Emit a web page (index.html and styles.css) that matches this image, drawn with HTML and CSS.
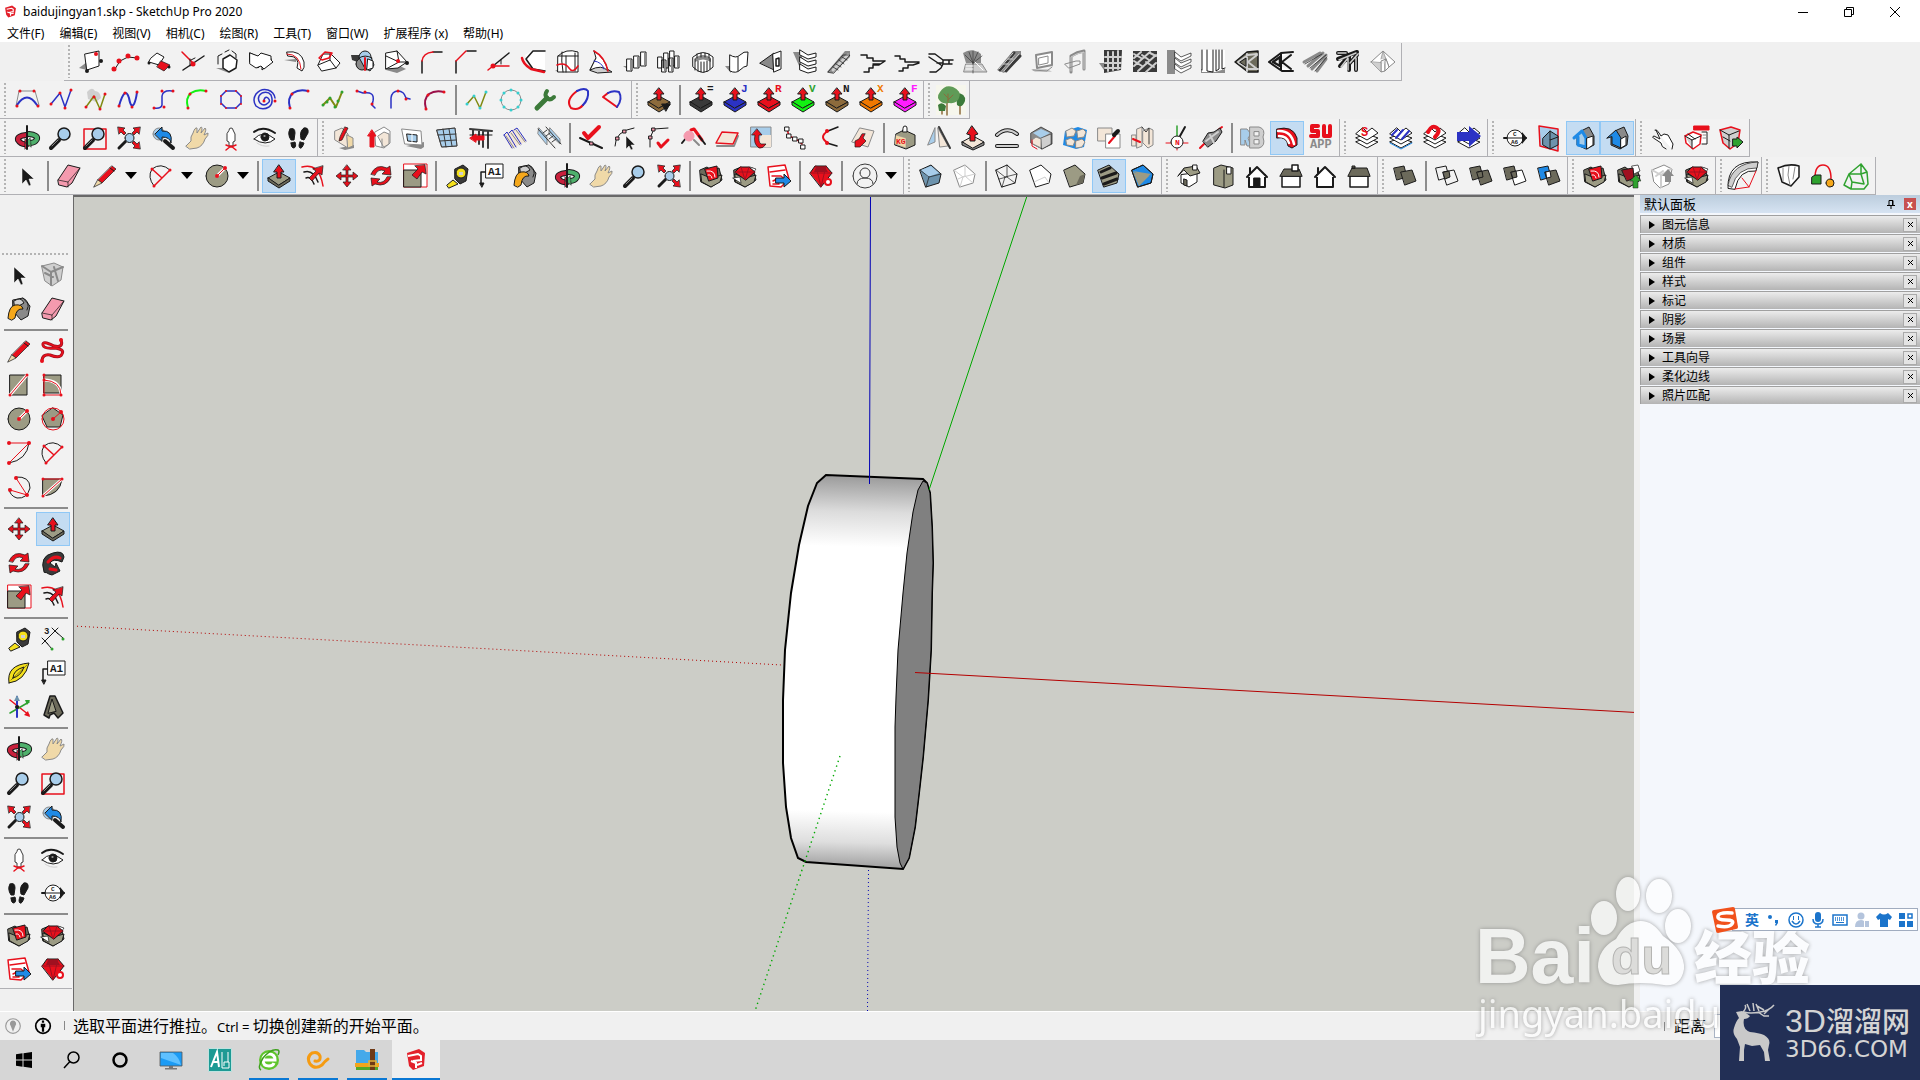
FILE: index.html
```html
<!DOCTYPE html>
<html lang="zh-CN">
<head>
<meta charset="utf-8">
<title>baidujingyan1.skp - SketchUp Pro 2020</title>
<link rel="stylesheet" href="styles.css">
</head>
<body>
<header class="titlebar">
  <svg class="app-icon" viewBox="0 0 24 24"><path fill="#e3202b" d="M2 5 15 1l7 5-2 13-12 4-4-5z"/><path fill="none" stroke="#fff" stroke-width="2" d="M5 8l9-2 3 2v4l-8 2M6 13l6 2v5M13 16l5-1"/></svg>
  <h1 class="title">baidujingyan1.skp - SketchUp Pro 2020</h1>
  <div class="window-controls">
    <button class="win-btn" aria-label="最小化"><svg viewBox="0 0 12 12"><path d="M1 6.500h10"/></svg></button>
    <button class="win-btn" aria-label="还原"><svg viewBox="0 0 12 12"><path d="M1.500 3.500h7v7h-7zM3.500 3.500v-2h7v7h-2"/></svg></button>
    <button class="win-btn" aria-label="关闭"><svg viewBox="0 0 12 12"><path d="M1 1l10 10M11 1L1 11"/></svg></button>
  </div>
</header>
<nav class="menubar">
  <button>文件(F)</button><button>编辑(E)</button><button>视图(V)</button><button>相机(C)</button><button>绘图(R)</button><button>工具(T)</button><button>窗口(W)</button><button>扩展程序 (x)</button><button>帮助(H)</button>
</nav>
<section class="toolbars" aria-label="工具栏">
  <div class="toolbar-row indented">
    <div class="toolbar" data-tools="planePts dotArc foldRed crossPt hexShadow extrudeArrow bendPipe domeRed sphereRed hullRed filletA filletB angleRed wedgeRed boxRed sailRed columns columns2 ringCols sheet coneWin shelves ramp stairsA stairsB stairsC spiral escalator frameA frameB lattice weave louver blinds trussA trussB beams rafters roof"></div>
  </div>
  <div class="toolbar-row">
    <div class="toolbar" data-tools="bezArc bezPoly bezCloud bezU bezS bezGreen bezRound spiralB bezBlue bezLime bezStep bezHook bezMaroon | bezNode bezCircle wrench loopRB loopRB2"></div>
    <div class="toolbar" data-tools="pushMenu | pushE pushJ pushR pushV pushN pushX pushF"></div>
    <div class="toolbar" data-tools="trees"></div>
  </div>
  <div class="toolbar-row">
    <div class="toolbar" data-tools="orbit zoom zoomWin zoomExt prev hand person eye feet"></div>
    <div class="toolbar" data-tools="wallPen wallUp winFrame winGrid fence steps ladder | checkRed nodeArrow nodeCheck joinRed faceRed turnRed chain splitRed pageRed | kg mirror liftUp curveBar boxOpen boxes4 picker blocks compass screw | rb suFan* suapp"></div>
    <div class="toolbar" data-tools="layS layB layQ layGo"></div>
    <div class="toolbar" data-tools="section secPlane secCut* secFill*"></div>
    <div class="toolbar" data-tools="point compRed compGo"></div>
  </div>
  <div class="toolbar-row">
    <div class="toolbar" data-tools="cursor | eraser pencil+ arc+ circle+ | pushpull* offset move rotate scale | tape label bucket | orbit hand zoom zoomExt | whBox whGem whSend | gemGear | user+"></div>
    <div class="toolbar" data-tools="cubeX cubeBack | cubeWire cubeHidden cubeShade cubeTex* cubeMono"></div>
    <div class="toolbar" data-tools="hIso hTop hFront hRight hBack hLeft"></div>
    <div class="toolbar" data-tools="solidShell | solidInt solidUni solidSub solidTrim"></div>
    <div class="toolbar" data-tools="whBox whUp whGray whGem"></div>
    <div class="toolbar" data-tools="fan"></div>
    <div class="toolbar" data-tools="cloth linkBall meshG"></div>
  </div>
</section>
<main class="workspace">
  <aside class="palette" aria-label="大工具集">
    <div class="palette-box">
      <div class="palette-grid" data-tools="cursor compGray bucket eraser | pencil freehand rect rotRect circle polygon arc2 arc arc3 pie | move pushpull* rotate follow scale offset | tape dim protractor label axes text3d | orbit hand zoom zoomWin zoomExt prev | person eye feet section | whBox whGem whSend gemGear"></div>
    </div>
  </aside>
  <section class="viewport" aria-label="模型视图">
    <svg viewBox="74 197 1560 814" preserveAspectRatio="xMidYMid slice">
      <defs><linearGradient id="rim" gradientUnits="userSpaceOnUse" x1="868" y1="477" x2="858" y2="866">
        <stop offset="0" stop-color="#9c9c9c"/><stop offset=".04" stop-color="#b8b8b8"/><stop offset=".09" stop-color="#dcdcdc"/><stop offset=".18" stop-color="#fff"/><stop offset=".86" stop-color="#fff"/><stop offset=".94" stop-color="#dedede"/><stop offset="1" stop-color="#a4a4a4"/>
      </linearGradient></defs>
      <path fill="url(#rim)" stroke="#000" stroke-width="2" d="M826 475 817 483 808 506 799 545 791 593 785 650 783 700V763L786 807 791 838 798 858 806 862 903 869 909 858 915 827 919 793 923 757 928 700 931 650 932 593 933 563 932 527 930 493 927 483 923 479z"/>
      <path fill="#808080" stroke="#000" d="M923 481 918 490 913 512 907 553 903 593 898 650 896 697 895 727V817L897 847 900 863 903 869 909 858 915 827 919 793 923 757 928 700 931 650 932 593 933 563 932 527 930 493 927 483z"/>
      <g fill="none">
        <path stroke="#0000b4" d="M870.500 196 869.500 484"/><path stroke="#0000b4" stroke-dasharray="1 3" d="M868.500 870 867.500 1011"/>
        <path stroke="#00a800" d="M1027 196 929 490"/><path stroke="#00a800" stroke-width="1.400" stroke-dasharray="1.400 3.600" d="M840 756 755 1011"/>
        <path stroke="#b40000" stroke-dasharray="1 3" d="M73 626 782 665"/><path stroke="#b40000" d="M915 672.500 1636 712.500"/>
      </g>
    </svg>
  </section>
  <aside class="tray">
    <div class="tray-head"><h2>默认面板</h2>
      <button class="pin" aria-label="自动隐藏"><svg viewBox="0 0 8 10"><path fill="none" stroke="#000" d="M2 6V1.500h4V6M5.500 1v5M0 6.500h8M4 7v3"/></svg></button>
      <button class="tray-close" aria-label="关闭面板">x</button></div>
    <div class="tray-row"><button class="expand">图元信息</button><button class="row-close" aria-label="关闭"></button></div>
    <div class="tray-row"><button class="expand">材质</button><button class="row-close" aria-label="关闭"></button></div>
    <div class="tray-row"><button class="expand">组件</button><button class="row-close" aria-label="关闭"></button></div>
    <div class="tray-row"><button class="expand">样式</button><button class="row-close" aria-label="关闭"></button></div>
    <div class="tray-row"><button class="expand">标记</button><button class="row-close" aria-label="关闭"></button></div>
    <div class="tray-row"><button class="expand">阴影</button><button class="row-close" aria-label="关闭"></button></div>
    <div class="tray-row"><button class="expand">场景</button><button class="row-close" aria-label="关闭"></button></div>
    <div class="tray-row"><button class="expand">工具向导</button><button class="row-close" aria-label="关闭"></button></div>
    <div class="tray-row"><button class="expand">柔化边线</button><button class="row-close" aria-label="关闭"></button></div>
    <div class="tray-row"><button class="expand">照片匹配</button><button class="row-close" aria-label="关闭"></button></div>
  </aside>
</main>
<footer class="statusbar">
  <button class="status-btn" aria-label="地理位置"><svg viewBox="0 0 16 16"><circle cx="8" cy="8" r="6.500" fill="none" stroke="#999"/><path fill="#999" d="M8 3a3 3 0 0 1 2 5L8 13 6 8a3 3 0 0 1 2-5"/></svg></button>
  <button class="status-btn" aria-label="归属信息"><svg viewBox="0 0 16 16"><circle cx="8" cy="8" r="6.500" fill="none" stroke="#000" stroke-width="1.500"/><path fill="#000" d="M7 3h2v2H7zM6 6h4v3H9v4H7V9H6z"/></svg></button>
  <p class="hint">选取平面进行推拉。<span class="latin">Ctrl = </span>切换创建新的开始平面。</p>
  <label class="measure"><span>距离</span><input type="text" aria-label="距离"></label>
</footer>
<nav class="taskbar" aria-label="任务栏">
  <div class="task-group">
    <button aria-label="开始"><svg viewBox="0 0 24 24"><path d="M4 6.200 10.500 5.300V11.500H4zM11.500 5.200 20 4v7.500h-8.500zM4 12.500h6.500v6.200L4 17.800zM11.500 12.500H20V20l-8.500-1.200z"/></svg></button>
    <button aria-label="搜索"><svg viewBox="0 0 24 24"><path fill="none" stroke="#000" stroke-width="1.500" d="M9.500 14 4 20M8 9.500a5.500 5.500 0 1 0 11 0a5.500 5.500 0 1 0-11 0"/></svg></button>
    <button aria-label="Cortana"><svg viewBox="0 0 24 24"><circle cx="12" cy="12" r="6.500" fill="none" stroke="#000" stroke-width="2.500"/></svg></button>
  </div>
  <div class="task-group apps">
    <button aria-label="此电脑"><svg viewBox="0 0 24 24"><path fill="#1b9bf5" stroke="#555" stroke-width=".8" d="M1 4h22v14H1z"/><path fill="#5ec0ff" d="M2 5h12q6 4 8 12L2 10z"/><path fill="#777" d="M10 18h4v2h4v1.500H6V20h4z"/></svg></button>
    <button aria-label="Auto CAD"><svg viewBox="0 0 24 24"><path fill="#1d9a94" stroke="#bfe3e0" d="M.5.500h23v23H.500z"/><path fill="none" stroke="#fff" stroke-width="2" d="M3 19 9 4l2 15M5 14h5"/><path fill="none" stroke="#fff" d="M14 4v16h7v-6h-5v4M20 4v10"/></svg></button>
    <button class="open" aria-label="浏览器"><svg viewBox="0 0 24 24"><circle cx="12" cy="12" r="10" fill="#5fc52c"/><path fill="none" stroke="#fff" stroke-width="3" d="M6 12h12q0-6-6-6t-6 6 6 6q4 0 5-3"/><path fill="none" stroke="#3da01c" stroke-width="1.500" d="M4 22Q0 20 6 10 14 0 21 2q2 1 0 5"/></svg></button>
    <button class="open" aria-label="优酷"><svg viewBox="0 0 24 24"><path fill="none" stroke="#f59b12" stroke-width="3" stroke-linecap="round" d="M9 13q6 1 5-5-2-5-8-3-6 4-2 11 5 6 12 1 3-4 6-6"/></svg></button>
    <button class="open" aria-label="压缩"><svg viewBox="0 0 24 24"><path fill="#45a9ea" d="M1 2h8l2 2h12v12H1z"/><path fill="#f3a51c" d="M0 15h24v4H0z"/><path fill="#55a829" d="M1 19h22v3H1z"/><path fill="#6f3a17" d="M15 1h5v21h-5z"/><path fill="none" stroke="#e5b13a" stroke-width="1.500" d="M14 13h7v5h-7z"/></svg></button>
    <button class="open current" aria-label="SketchUp"><svg viewBox="0 0 24 24"><path fill="#e3202b" d="M3 5 15 1l6 4-1 13-11 4-4-4z"/><path fill="none" stroke="#fff" stroke-width="2" d="M4 8l10-2 3 2v4l-8 1M7 13l5 2v5M13 17l5-2"/></svg></button>
  </div>
</nav>

<div class="watermark">
  <svg viewBox="0 0 350 180">
    <g class="mark">
      <text class="bai" x="0" y="111">Bai</text>
      <g><ellipse cx="129" cy="46" rx="13" ry="17"/><ellipse cx="153" cy="22" rx="12" ry="17"/><ellipse cx="184" cy="24" rx="13" ry="17"/><ellipse cx="203" cy="54" rx="13" ry="17"/>
      <path d="M166 49q12 0 22 15 22 15 21 33-3 18-20 16-24-4-46 0-18 0-20-18 0-18 18-28 10-18 25-18z"/></g>
      <text class="cn" x="219" y="107">经验</text>
      <text class="url" x="3" y="156">jingyan.baidu</text>
    </g>
    <text class="du" x="136" y="102">du</text>
  </svg>
</div>

<div class="ime" role="toolbar" aria-label="输入法">
  <svg class="ime-logo" viewBox="0 0 28 28"><path fill="#f1511b" d="M3 4 22 1q2 0 2 2l3 18q0 2-2 2L7 27q-2 0-2-2L1 6q0-2 2-2"/><path fill="none" stroke="#fff" stroke-width="3.500" stroke-linecap="round" d="M21 7Q8 6 7 10t8 4 6 4-14 2"/></svg>
  <button class="ime-lang">英</button>
  <button aria-label="标点"><svg viewBox="0 0 16 16"><circle cx="4" cy="5" r="2"/><path d="M9 8h3v3l-2 3-1-1 1-2H9z"/></svg></button>
  <button aria-label="表情"><svg viewBox="0 0 16 16"><circle class="line" cx="8" cy="8" r="7"/><path d="M5 4h1v4H5zM10 4h1v4h-1z"/><path class="line" d="M4 9q4 6 8 0"/></svg></button>
  <button aria-label="语音"><svg viewBox="0 0 16 16"><rect x="5" y="0" width="6" height="10" rx="3"/><path class="line" d="M3 7q0 5 5 5t5-5M8 12v3M5 15h6"/></svg></button>
  <button aria-label="键盘"><svg viewBox="0 0 16 16"><rect class="line" x="1" y="3" width="14" height="10"/><path class="dash" d="M3 6h10M3 8h10"/><path d="M4 10h8v1H4z"/></svg></button>
  <button class="dim" aria-label="账户"><svg viewBox="0 0 16 16"><circle cx="7" cy="4" r="3.500"/><path d="M1 15q0-7 6-7 2 0 3 1v6zM11 9h4v6h-4z"/></svg></button>
  <button aria-label="皮肤"><svg viewBox="0 0 16 16"><path d="M4 1q4 3 8 0l4 4-2 3-2-1v8H4V7L2 8 0 5z"/></svg></button>
  <button aria-label="工具箱"><svg viewBox="0 0 16 16"><path d="M1 1h6v6H1zM1 9h6v6H1zM9 9h6v6H9z"/><path class="line" d="M10 2h4v4h-4z"/></svg></button>
</div>

<div class="brand">
  <svg viewBox="0 0 48 62" class="deer"><path fill="#c9c9c9" d="M4 10l6-1 4 2 4 3q-2 3-6 3-2 10 6 13 9 1 14 3 7 4 5 10l-1 5 2 11h-5l-1-9-4-7-8 1-7-2-1 6v11h-5l1-14-3-8q-5-6-3-11 2-7 5-10z"/><path fill="none" stroke="#c9c9c9" stroke-width="1.500" d="M11 10Q15 6 13 3M12 10q6 2 16 0 9-1 14-7M18 9l-3-7M22 9l-1-8M27 9l-3-7M32 8l-7-4M26 10l6 4h5M37 7l-5 5"/></svg>
  <div class="brand-text"><strong><span class="brand-3d">3D</span>溜溜网</strong><span class="brand-url">3D66.COM</span></div>
</div>
<script src="icons.js"></script>
</body>
</html>
```
FILE: styles.css
```css
* { box-sizing: border-box; }
html, body { margin: 0; height: 100%; }
body {
  position: relative;
  display: flex;
  flex-direction: column;
  overflow: hidden;
  background: #f0f0f0;
  color: #000;
  font: 12px/16px "Noto Sans", "Noto Sans CJK SC", sans-serif;
}
button { margin: 0; padding: 0; border: 0; background: none; color: inherit; font: inherit; }
svg { display: block; }

/* title and menus */
.titlebar { display: flex; align-items: center; height: 23px; padding: 0 2px 0 4px; background: #fff; }
.app-icon { width: 13px; height: 15px; }
.title { flex: 1; margin: 0 0 0 6px; font-size: 12px; font-weight: 400; }
.window-controls { display: flex; }
.win-btn { display: grid; place-items: center; width: 46px; height: 20px; }
.win-btn svg { width: 12px; height: 12px; fill: none; stroke: #000; }
.menubar { display: flex; gap: 15px; height: 19px; padding: 2px 7px 0; background: #fff; white-space: nowrap; }

/* toolbars */
.toolbars { padding-top: 1px; }
.toolbar-row { display: flex; height: 38px; }
.indented { padding-left: 64px; }
.toolbar {
  display: flex;
  align-items: center;
  flex: none;
  padding: 0 1px 0 10px;
  border: solid #b0b0b4;
  border-width: 0 1px 1px 0;
  background-color: #f2f2f2;
  background-image: linear-gradient(#f2f2f2 2px, transparent 2px), linear-gradient(#b4b4b4, #b4b4b4);
  background-repeat: repeat-y, no-repeat;
  background-size: 10px 4px, 2px 33px;
  background-position: 0 0, 4px 2px;
}
.tool { display: grid; place-items: center; width: 34px; height: 34px; border: 1px solid transparent; }
.tool svg { width: 24px; height: 24px; overflow: visible; stroke-linecap: round; stroke-linejoin: round; }
.tool.active { border-color: #90c8f6; background: #c4dcf2; }
.tool.split { display: flex; align-items: center; width: 56px; padding-left: 6px; gap: 8px; }
.tool.split::after { content: ""; border: solid transparent; border-width: 7px 6px 0; border-top-color: #000; }
.sep { width: 2px; height: 30px; margin: 0 3px; background: #8c8c8c; }

/* workspace */
.workspace { display: flex; flex: 1; min-height: 0; }
.palette { width: 73px; padding-top: 55px; }
.palette-box {
  width: 72px;
  padding: 8px 0 2px 2px;
  border-bottom: 1px solid #b0b0b4;
  background-color: #f2f2f2;
  background-image: linear-gradient(90deg, #f2f2f2 2px, transparent 2px), linear-gradient(#b4b4b4, #b4b4b4);
  background-repeat: repeat-x, no-repeat;
  background-size: 4px 7px, 68px 2px;
  background-position: 0 0, 2px 3px;
}
.palette-grid { display: grid; grid-template-columns: 34px 34px; }
.palette .sep { grid-column: 1 / -1; width: 64px; height: 2px; margin: 3px 2px; }
.viewport { flex: 1; min-width: 0; border: solid #696969; border-width: 2px 0 0 1px; background: #cccdc7; overflow: hidden; }
.viewport svg { width: 100%; height: 100%; }
.tray { width: 286px; border-left: 6px solid #f0f0f0; background: #f4f7fc; }
.tray-head { display: flex; align-items: center; height: 18px; margin-bottom: 2px; padding: 0 4px; background: linear-gradient(#bccddd, #d6e3f2); }
.tray-head h2 { flex: 1; margin: 0; font-size: 13px; font-weight: 400; }
.pin { width: 8px; margin-right: 9px; }
.tray-close { width: 12px; height: 12px; background: #c75050; color: #fff; font-size: 10px; font-weight: 700; line-height: 10px; }
.tray-row { display: flex; align-items: center; height: 18px; margin-bottom: 1px; padding-right: 3px; border: solid #a0a0a0; border-width: 1px 0 0 1px; background: linear-gradient(#ececec, #b4b4b4); }
.expand { display: flex; flex: 1; align-items: center; gap: 7px; padding-left: 8px; text-align: left; }
.expand::before { content: ""; border: solid transparent; border-width: 4px 0 4px 6px; border-left-color: #000; }
.row-close { width: 14px; height: 14px; border: 1px solid #aaa; background: linear-gradient(45deg, transparent 42%, #000 42%, #000 58%, transparent 58%) center / 5px 5px no-repeat, linear-gradient(-45deg, transparent 42%, #000 42%, #000 58%, transparent 58%) center / 5px 5px no-repeat, #e4e4e4; }

/* status bar */
.statusbar { display: flex; align-items: center; height: 29px; padding-left: 4px; border-top: 1px solid #fff; }
.status-btn { width: 18px; margin-right: 12px; }
.status-btn svg { width: 18px; height: 18px; }
.hint { flex: 1; margin: 0; padding-left: 9px; background: linear-gradient(#888, #888) no-repeat 0 6px / 1px 9px; font-size: 16px; line-height: 22px; white-space: pre; }
.hint .latin { font-size: 13px; }
.measure { display: flex; align-items: center; gap: 8px; width: 256px; padding-left: 10px; background: linear-gradient(#888, #888) no-repeat 0 8px / 1px 9px; font-size: 16px; line-height: 24px; white-space: nowrap; }
.measure input { flex: 1; min-width: 0; height: 24px; border: 1px solid #a9b3c4; background: #fff; }

/* taskbar */
.taskbar { display: flex; gap: 3px; height: 40px; background: #d6d6d6; }
.task-group { display: flex; }
.task-group button { display: grid; place-items: center; width: 48px; height: 40px; }
.task-group svg { width: 24px; height: 24px; }
.apps { gap: 1px; }
.apps .open { background: linear-gradient(#0a78d4, #0a78d4) no-repeat 4px 38px / 40px 2px; }
.apps .current { background: linear-gradient(#0a78d4, #0a78d4) no-repeat 0 38px / 48px 2px, #efefef; }

/* overlays */
.watermark { position: absolute; right: 95px; bottom: 28px; width: 350px; height: 180px; }
.mark { fill: #fff; opacity: .72; filter: drop-shadow(0 0 2px #808080); }
.bai { font: 700 77px "Liberation Sans", sans-serif; }
.cn { font: 900 58px "Noto Sans CJK SC", sans-serif; }
.url { font: 38px "Noto Sans", sans-serif; }
.du { fill: #dcdcda; stroke: #b4b4b2; font: 700 50px "Liberation Sans", sans-serif; }
.ime { position: absolute; right: 2px; bottom: 149px; display: flex; align-items: center; height: 23px; border: 1px solid #a0acbf; background: #fff; }
.ime-logo { width: 28px; height: 28px; margin: 0 2px 0 -22px; }
.ime button { display: grid; place-items: center; width: 22px; height: 21px; color: #1b74cb; }
.ime button svg { width: 16px; height: 16px; fill: currentColor; }
.ime .line, .ime .dash { fill: none; stroke: currentColor; stroke-width: 1.5; }
.ime .dash { stroke-dasharray: 1 1; }
.ime .dim { color: #b4c4dc; }
.ime .ime-lang { font-size: 14px; font-weight: 700; }
.brand { position: absolute; right: 0; bottom: 0; display: flex; align-items: center; gap: 5px; width: 200px; height: 95px; padding-left: 12px; background: #222f55; color: #d4d4d4; }
.deer { flex: none; width: 48px; height: 62px; }
.brand-text { display: flex; flex-direction: column; white-space: nowrap; }
.brand strong { font: 500 28px/32px "Noto Sans CJK SC", sans-serif; }
.brand .brand-3d { font: 32px/32px "Liberation Sans", sans-serif; }
.brand-url { font: 23px/24px "DejaVu Sans", sans-serif; }
```
FILE: icons.js
```js
// Each icon is a list of layers on a 24-unit grid: "<fill><stroke><width>:<path>",
// or "T<fill><size>:x y text" for a caption.
const INK = {
  n: 'none', k: '#1a1a1a', w: '#fff', r: '#e8101c', o: '#9c9b84', g: '#8a8a8a', l: '#cfcfcf',
  b: '#2b32c4', B: '#1f8ae6', c: '#35cfcf', G: '#2fa22f', L: '#12f012', y: '#f4e01c', Y: '#f5a81b',
  p: '#f49aae', s: '#f0d9a8', t: '#8d6b3c', D: '#3a3a3a', d: '#6c6a5b', m: '#9b1048', M: '#ff1cff',
  O: '#f07800', S: '#a8cdea', u: '#6d93ad', e: '#f3e6d8', a: '#7f8a12', R: '#a01020',
  F: '#5f9b57', f: '#3c7a3a', C: '#c8203c', E: '#4fb06c', i: '#f6f6ec'
};
const ARROW = 'rk1:M12 0 17 6H14V12H10V6H7z';
const push = (c, l, ink) => `${c}k1:M1 14 12 8 23 14 12 20z|${c}k1:M1 14v3l11 7 11-7v-3L12 20z|${ARROW}` + (l ? `|T${ink}11:18 4 ${l}` : '');
const layers = 'wk1:M1 16 12 22 23 16 12 12z|wk1:M1 12 12 18 23 12 12 8z|wk1:M1 8 12 14 23 7 17 2 12 6 8 2z';
const house = 'wk1:M4 11v8l8 4 8-5v-9z|ok1:M1 12 7 4 19 2 23 9 13 12 7 6z|wk1:M16 1h4v5h-4z|dk1:M7 15l3 1v6l-3-1z';
const whBox = 'dk1:M1 6 8 3 12 6 20 4 23 16 12 23 2 18z|ok1:M2 10 12 14 23 11 21 18 12 23 3 18z';
const glass = 'nk4:M10 14 2 22|ng1:M9 14 3 20|Sk1.5:M9 8a6 6 0 1 0 12 0a6 6 0 1 0-12 0';
const slabs = (a, b) => `${a}k1:M1 4 11 2 14 13 4 16z|${b}k1:M8 8 19 6 23 17 12 21z`;
const hexa = 'M1 6 12 1 22 10 20 19 7 23z';
const ICONS = {
  planePts: 'gn:M0 18 8 12v8z|wk1:M6 4 20 1v15L8 20z|nr4:M17 4h0|nk4:M8 21h0M22 11h0',
  dotArc: 'nk1:M2 19 7 11 15 7 24 8|nr5:M1 19h0M6 11h0M15 6h0M24 8h0',
  foldRed: 'wk1:M4 8 10 3 17 7 12 15 2 12z|rk.7:M14 11 23 15 17 21 10 17z|nk3:M2 13h0M22 17h0',
  crossPt: 'nr1.5:M1 2 13 14|nk1.5:M23 6 2 20|nk1:M10 10l4-2M9 9v7|nr5:M12 14h0',
  hexShadow: 'gn:M1 18h10l3 5z|nk1:M3 14V6l4-2M10 2l4-2M17 1l4 3v4|wk1.5:M8 9 15 5 22 10 21 18 14 22 8 18z',
  extrudeArrow: 'lk1:M1 12 9 18 13 14v6l10-8-2-6-9-2-2 3L1 3z|wk1:M1 3 9 6 12 3 22 6v4l2 2-9 7-3-3-5 2-6-4z',
  bendPipe: 'gn:M1 10l12-1v3z|wk1:M4 2q14-2 17 10 1 6-2 9l-5-3q4-12-9-12z|nr1:M4 4q13 0 14 15',
  domeRed: 'wk1:M1 15 6 4h8l9 9-4 5-14 3z|nk1:M1 15 13 10 19 18M13 10V4|nr1.5:M2 8 8 2l7 1-3 5-7 2z',
  sphereRed: 'Dn:M0 5h9v8L1 10z|gk1:M5 14a6 6 0 1 0 12 0a6 6 0 1 0-12 0|Sk1:M8 7a6 6 0 1 1 12 0l3 8-4 6-5-3z|wk1:M17 9l5 2v7l-6 2z|nr2:M14 8v12|nk1:M8 8q6-4 13 0',
  hullRed: 'gn:M1 20 13 15l8 4-9 4z|wk1:M1 3 12 1 22 12 13 18 1 19z|nk1:M1 6 14 12 22 12M14 12 1 19M12 1l2 11|nr4:M13 11h0|nk4:M22 13h0',
  filletA: 'nk1.5:M3 11v12M14 2h9|nr1.5:M3 11q1-8 11-9',
  filletB: 'nk1.5:M3 11v12M14 1h9|nr1.5:M3 11 13 1',
  angleRed: 'nk1.5:M6 16 22 3|nr1.5:M1 20 6 16h16|nr5:M6 16h0|nk1:M14 10v4',
  wedgeRed: 'wn:M4 5 12 0h12v20l-12-1z|nk1.5:M5 9 12 1h12M5 9l7 10 12 2|nr2.500:M1 8q1 6 9 11l13 3',
  boxRed: 'gn:M0 21l7-4v5z|wk1:M3 6q8-8 20-4v20H3zM3 6h20M11 6v16|nk1:M7 2q-1 8 1 20M20 3v18|nr1.5:M2 15q8-3 12 3t9-2',
  sailRed: 'lk1:M1 20 7 8 12 15 23 22 9 23z|wk1:M5 1 7 8 1 20q12-6 18 1Q16 8 5 1|nr1.5:M5 1Q16 7 19 21|nb1:M5 11q8 1 10 8',
  columns: 'gn:M0 16h9v6z|wk1:M4 9h5v12H4zM11 6h5v12h-5zM18 2h5v14h-5z|gn:M7 10h2v10H7zM14 7h2v10h-2zM21 3h2v12h-2z',
  columns2: 'wk1:M1 7h4v11H1zM7 3h4v15H7zM13 1h4v15h-4zM5 10h4v12H5zM12 8h4v14h-4zM18 6h4v12h-4z|gn:M7 11h2v10H7zM14 9h2v12h-2zM20 7h2v10h-2z',
  ringCols: 'wk1:M2 7q10-9 20 0v10q-10 11-20 0z|gn:M4 8q8-6 16 0v4q-8-5-16 0z|nk1:M4 9v11M7 11v10M10 12v10M13 12v10M16 11v10M19 9v10M6 4v4M10 3v4M14 3v4M18 4v4',
  sheet: 'gn:M0 16h6v7z|wk1:M5 5q6 4 10 0t8-3l-1 14q-3 0-7 4t-10 1z|nk1:M13 7v14',
  coneWin: 'gk1:M1 13 15 3 16 20z|wk1:M14 4 22 1v18l-7 3z|nk1.5:M17 9v7h3V8z',
  shelves: 'gn:M0 2h10l-3 16z|wk1:M7 0 15 5 23 3V7L15 9 7 5zM7 7l8 5 8-2v4l-8 2-8-4zM7 14l8 5 8-2v4l-8 2-8-3z',
  ramp: 'gn:M0 22 18 1h5v6L6 23z|nl3:M6 20 21 5|nk.7:M1 22 16 5h7L7 23zM6 17l5 3M9 14l5 3M12 10l5 4M15 7l5 3',
  stairsA: 'nk1.5:M0 5h6v3h6v3h12M3 22h5v-4h4v-3h6l6-4M12 14h7',
  stairsB: 'nk1.5:M0 6h5v3h5v3h14M4 21h4v-3h5v-3h5l6-2',
  stairsC: 'nk1.5:M0 4h6l8 6h10M1 22h6l5-4 2-4h9M8 13h6v-3M20 10v4M0 7l12 8',
  spiral: 'gn:M0 3q9-6 18 1v9H3z|lg1:M3 14h16l5 8H1z|nD.7:M10 13 2 5M10 13 6 2M10 13V1M10 13 15 2M10 13 19 6M10 13v10|nw1:M3 16h7M3 19h7M12 12l8 8',
  escalator: 'gn:M0 20 16 1h8v4L7 23z|nw1:M4 21 18 4M11 21 24 7|nD3:M3 20 17 3M9 21 23 6|nl1:M2 19 16 3M7 21 22 4M6 14h6M11 9h5',
  frameA: 'ln:M0 19h17l4 3H4z|wg2:M5 5 21 2v13L6 18z|ng1:M8 8l9-2v7l-9 2zM2 20l14 1 5-4',
  frameB: 'ng3:M6 22V6q6-4 13-5v18|nl1:M6 21V7q6-4 13-5v17|ng1:M0 14l11-3h4v3L4 18z',
  lattice: 'Dn:M5 0 23 0 22 20 5 23z|gn:M0 13h5v7z|nl2:M9 2v19M14 2v18M19 1v18M6 7h16M6 13h16M6 18h15',
  weave: 'Dn:M0 1h24v21H0z|nl2:M1 8 8 2M1 16 17 2M5 21 23 5M13 22 23 13M1 4l7 4M9 5l7 5M1 11l8 5M13 12l8 5M17 3l6 3',
  louver: 'gn:M0 0h8v24H0z|wk.7:M8 2 14 7 24 3v3L14 11 8 7zM8 8l6 5 10-4v3l-10 5-6-4zM8 14l6 5 10-4v3l-10 5-6-4z',
  blinds: 'gn:M0 19h24v4H0z|wn:M1 0h23v19l-10 3H1z|nk1:M1 0v20M6 0v21l6 1V0M15 0v21l3-2V0M21 0v19l3-1',
  trussA: 'dk1.5:M0 12 12 2 23 1v21H13z|nl2:M3 12l10-7 9-1M4 13l10 6h9M12 4v17M13 12l9-7M13 12l9 7|nk1:M5 12l6-4v8z',
  trussB: 'wk2:M0 12 12 3 24 2M0 12l13 9h11M12 4v16M13 12l9-7M13 12l9 7|nk2.5:M4 12l7-5v9z',
  beams: 'ng3:M1 12 17 3M5 16 20 3M9 19 23 5M14 21 23 9|nk.7:M2 14 19 4M7 18 23 5M12 21 24 7',
  rafters: 'nk4:M1 3h8M1 9 20 2M3 16 12 6v14M12 14l8-9M19 20V8|nl1.5:M1 3h8M2 10 19 3M4 17l7-9v12M13 13l8-9M19 20V8',
  roof: 'wg1:M0 12 12 1 24 12 18 17 15 9 10 11v11l4-1v-7|lg.7:M0 12l10 10v-9zM10 9 12 1l3 8|wg1:M15 9l3 8-4 4v-9z',
  bezArc: 'ng1:M4 3h16L24 17M4 3 1 18|nb2:M2 17q10-15 20 0|nr3:M2 18h0M5 3h0M19 3h0M23 18h0',
  bezPoly: 'nb1.5:M2 16 11 5 16 19 22 2|nr3:M2 16h0M11 5h0M16 20h0M22 2h0',
  bezCloud: 'ln:M4 4q5-6 8-1 5 0 6 7l-5 4-8-3z|na1.5:M3 19 11 8 17 21 22 6|nr3:M3 19h0M11 9h0M17 21h0M22 6h0',
  bezU: 'nb2:M2 18Q8-3 12 10q2 11 5 6Q19 12 20 4|nr3:M2 18h0M8 5h0M15 19h0M20 4h0',
  bezS: 'nb1.500:M3 20q7 1 8-3V8Q12 2 21 3|nr3:M3 20h0M13 19h0M11 3h0M22 3h0',
  bezGreen: 'nL2:M3 20Q0 10 6 5 12 1 21 3|nr3:M3 20h0M5 6h0M21 3h0',
  bezRound: 'nb1.500:M7 3H17L22 8v7l-5 5H7L2 15V8z|nr2:M7 3h0M17 3h0M22 8h0M22 16h0M17 20h0M7 20h0M2 16h0M2 8h0',
  spiralB: 'nb1.500:M11 12q1-4 4-2 3 3 0 5-4 4-8 0-4-6 2-10 6-2 9 2 3 8-2 12-7 4-13-1Q-1 12 3 6 8 0 15 2q6 2 7 8|nr3:M11 13h0M22 13h0',
  bezBlue: 'nb2:M3 20Q0 10 6 5 12 1 21 3|nr3:M3 20h0M5 6h0M21 3h0',
  bezLime: 'na2:M2 17 9 10 15 19 21 4|nG3:M2 17h0M9 10h0M14 19h0M21 4h0M17 13h0M6 14h0',
  bezStep: 'nb1.500:M2 3l6 2q12-2 10 8l-1 4 3 3|nr3:M2 3h0M10 4h0M17 16h0',
  bezHook: 'nb1.500:M2 20V10Q3 3 9 3q6 0 8 7l4 1|nr3:M9 3h0M17 11h0',
  bezMaroon: 'nm2:M3 21Q0 11 6 6 12 2 21 4|nr3:M3 21h0M5 7h0M21 4h0',
  bezNode: 'na1.500:M2 16 9 8 15 20 21 4|nc3:M2 16h0M9 8h0M15 20h0M21 4h0',
  bezCircle: 'ng1:M2 12a10 10 0 1 0 20 0a10 10 0 1 0-20 0|nc3:M12 2h0M5 5h0M2 12h0M5 19h0M12 22h0M19 19h0M22 12h0M19 5h0',
  wrench: 'nf5:M4 20 14 10|nf4:M14 3q-3 4 0 7t7-1',
  loopRB: 'nr2:M10 3Q-2 12 4 20q7 3 12-3|nb2:M10 3q8-4 11 0 1 8-5 14',
  loopRB2: 'nr2:M16 19 2 9 7 5|nb2:M7 5q5-3 11-1 4 7-2 15',
  pushMenu: push('t') + '|kk1:M15 16h8l-4 7z',
  pushE: push('D', '=', 'k'), pushJ: push('b', 'J', 'b'), pushR: push('r', 'R', 'r'), pushV: push('L', 'V', 'G'),
  pushN: push('t', 'N', 'k'), pushX: push('O', 'X', 'O'), pushF: push('M', 'F', 'M'),
  trees: 'in:M-3-3h30v30H-3z|nt1.500:M8 11v16M21 12v14M3 20v6|fn:M17 5q10 0 9 8-3 8-8 4zM-1 17q4-4 8 1l-1 5h-6z|Fn:M1 4Q6-4 14-1q9 4 6 11-2 6-10 5-8 2-11-5 0-4 2-6|nt1:M9 14V6M9 12l5-5M9 10 5 6',
  orbit: 'nk6:M11 9Q2 10 3 14q3 5 9 4M14 8q9 1 8 5-2 4-7 4|nC4:M11 9Q2 10 3 14q3 5 9 4|nE4:M14 8q9 1 8 5-2 4-7 4|Ck.5:M10 13l6 5-6 5z|Ek.5:M15 12l-5 5 6 4z|nk2:M12 0v23',
  zoom: glass,
  zoomWin: 'nr1.5:M1 3h22v20H1z|' + glass,
  zoomExt: 'rk.7:M1 1l7 1-2 2 3 3-2 2-3-3-2 2zM23 1l-7 1 2 2-3 3 2 2 3-3 2 2zM23 23l-7-1 2-2-3-3 2-2 3 3 2-2z|nk3:M10 14 2 22|Sk1:M8 12a4.500 4.500 0 1 0 9 0a4.500 4.500 0 1 0-9 0',
  prev: 'Sg1:M2 8a6 6 0 1 0 12 0a6 6 0 1 0-12 0|nk4:M14 15 22 22|Bk1:M4 8 11 1v4q11-1 9 12-1-6-9-6v4z',
  hand: 'sg1:M1 20 6 15q-1-4 2-8 2-6 4-5v5l4-6q2 0 0 6l4-5q2 1-1 7l4-2q1 2-3 6-2 7-8 9l-7 1z',
  person: 'wD1:M10 4a2 2 0 1 1 4 0l2 4v7l-2 1v4h-4v-4l-2-1V8z|nr1.500:M7 24l5-4 5 4M7 19l5 2 5-2',
  eye: 'nk2:M1 6Q10-1 22 7|wk1:M1 13q9-10 21 0-9 8-21 0|kk1:M8 11a4 4 0 1 0 8 0a4 4 0 1 0-8 0|nl1:M4 17q5 4 12 3|ww1:M11 10h1',
  feet: 'kk1:M3 3q5-2 5 4l-1 7H4q-4-6-1-11M4 17l4-1q2 6-2 6-2-1-2-5M17 2q5-1 4 5l-4 7-3-1q-2-8 3-11M13 16l4 1q-2 6-4 5-2-2 0-6',
  wallPen: 'gn:M6 22l15-3v3l-9 2z|eg1:M2 5l7-3 6 6v14L2 14z|sg1:M14 9l6 3v8l-5 2z|rk.7:M12 1l3 1-6 12-3 1 1-4z',
  wallUp: 'wg1:M8 6 17 1l6 4v12l-6 5-8-2z|eg1:M11 10l6-4 5 2v10l-5 3zM15 13v8|rr1:M5 4l4 6H7v11H3V10H1z',
  winFrame: 'gn:M5 20l18-4v5l-3 2z|wg1:M1 3l19 2 1 14-17-1z|Sk1:M6 8l10 1v7L7 15z|nw1:M11 8v8',
  winGrid: 'Sg1:M2 4l18-2 2 18-15 1z|nD1:M2 4l18-2 2 18-15 1zM3 9l18-1M5 15l16-1M8 3l3 18M14 3l3 17',
  fence: 'nD2:M1 3l22 2M4 4v8M10 5v13M14 5v16M19 5v17|nk1:M1 9h22|rr1:M1 12l6-4v2h8v4H7v2z',
  steps: 'en:M1 9 12 2 24 15 8 23z|ng1:M3 10l8 12M8 7l9 12M13 4l9 12|nb1:M1 9l3-3 9 15M6 7l3-3 9 14M11 4l3-2 9 13M1 9l8 13',
  ladder: 'Sg1:M2 2l8 9v8L1 8zM13 2l10 11v5L12 8z|nD1:M1 3 18 22M9 1l15 17M9 10l4-3M12 13l4-3M15 16l4-3M6 7l4-3',
  checkRed: 'nr4:M5 7l4 5 11-11|nk2:M1 12 23 22|pk1:M11 16h3v3h-3z',
  nodeArrow: 'nk1:M2 20Q2 5 21 2|pk1:M10 4h3v3h-3zM3 11h3v3H3z|kw.5:M13 10v13l3-3 2 4 2-1-2-4h4z',
  nodeCheck: 'nk1:M3 21v-9l4-9 14-1|pk1:M5 2h3v3H5zM2 10h3v3H2z|nr3:M11 17l3 4 7-7',
  joinRed: 'nr3:M10 4l3-1 8 11|nk2:M1 17l8-10M18 10l6 8|pp1:M3 10a5 5 0 1 0 10 0a5 5 0 1 0-10 0|ng2:M13 14l5 5',
  faceRed: 'ng2:M2 20h17l4-10|er1.500:M7 6l16 1-5 11-17-1z',
  turnRed: 'Sg1:M2 1h20v20H2z|en:M12 9h10v12H9z|rk.7:M8 3 13 9h-3q-1 7 2 9h5q-3 5-7 4-6-4-4-13H3z',
  chain: 'nr1.5:M4 3l2 7 7 3 6 5|wk1:M2 1h4v4H2zM4 8h4v4H4zM10 11h4v4h-4zM16 13h4v4h-4zM18 19h4v4h-4z',
  splitRed: 'nr2:M11 5Q1 11 11 17|nk1.5:M11 5l10-4M10 17l10 3|nr4:M10 5h0M10 17h0',
  pageRed: 'eg1:M9 2l14 3-6 16L1 16z|rk.7:M14 8l-2 4 3 3-6 6H4v-6l4-2 3-5z',
  kg: 'ok1:M3 8l8-4 11 5v10l-9 4L2 19z|sg.5:M3 9l10 3v10L2 18z|wk1:M10 2a2 2 0 1 1 4 0v4h-4z|Tr8:3 18 KG',
  mirror: 'Sg1:M8 2v14l-7 3z|eg1:M11 2l10 18-8 1z|nD2:M12 1l11 21',
  liftUp: 'ek1:M1 16 12 10l11 6-11 7z|gk1:M1 16v3l11 5 11-5v-3l-11 6z|rk1:M11 0l6 8-3 1v6H9V9L6 8z',
  curveBar: 'nk4:M2 9Q12 0 22 8M2 20h20|nl2:M2 9Q12 0 22 8M2 20h20',
  boxOpen: 'gk.7:M2 7 12 1l11 6v11l-10 5L2 17z|Sn:M4 7l8-4 9 4-9 5z|lk.5:M12 12l10-4v10l-9 5z|eg1:M3 14l4-3 5 2v9l-8-4z|nr1:M3 14v6l5 3',
  boxes4: 'Bn:M2 5 15 1l9 3-3 17-8 2-13-4z|eg1:M3 5l6-3 4 3-2 5-7 1zM14 5l6-2 3 3-2 5-6 1zM3 14l5-2 4 3-2 5-6-1zM13 15l6-2 3 3-3 5-6 1z',
  picker: 'eg1:M1 2h14v13H1z|wg1:M9 8h14v14H9z|nr2:M12 17l6-7|nk4:M17 9l4-4',
  blocks: 'eg1:M6 3l5-2v19l-5 2zM12 5l6-3 4 2v15l-5 3-5-5zM1 9h4v11H1z|nD1:M11 1l4 5 3-4v16|nr2:M2 13l7 3',
  compass: 'nr1:M1 17h22M12 13v11|nG1.500:M12 0v11|nk2:M15 10l5-9|wk1:M6 16a6 6 0 1 0 12 0a6 6 0 1 0-12 0|Tr8:10 19 N',
  screw: 'nr2:M1 22l4-4M19 4l4-3|gk1:M4 15l5-8 6-1 6-4 2 4-6 9-8 6z|nl2:M7 15 19 6M11 9l4 8',
  rb: 'Sg1:M0 3h6l4 5-3 4 3 8H6L4 14v5H0z|lg1:M9 1h9q7 2 4 10 3 9-4 11H9zM13 6v4h5V6zM13 14v4h5v-4z',
  suFan: 'rk1:M2 3q16-4 20 9v7l-5 3-4-2Q12 10 2 12z|nw2.500:M3 5q13-1 16 13M4 10q8 0 10 7',
  suapp: 'nr4:M9 0H3v5h6v5H2M15 0v10h6V0|Tg12:1 22 APP',
  layS: layers + '|Tr12:6 10 S', layB: layers + '|nb2:M3 9l5-5M7 12l7-8M13 13l7-8|nB1:M1 17l11 6 11-6',
  layQ: layers + '|nr4:M5 6q4-8 9-4 4 3-2 9', layGo: layers + '|bn:M0 6h12V0l12 10-12 11v-6H0z',
  section: 'nk2:M1 12h22|wk1:M4 12a8 8 0 1 0 16 0a8 8 0 1 0-16 0|kn:M19 6l5 6-5 6z|nk1:M4 12h16|Tk6:10 10 C|Tk6:8 18 A6',
  secPlane: 'Sr1.5:M2 0l19 3v22L3 20z|uk1:M6 12l7-7 8 5v9l-8 4-7-4z|nk1:M13 5v9l8-3M13 14v8',
  secCut: 'gk1:M12 4l6-3 5 9v9l-8 4-9-4v-9z|Sn:M3 12l8-7 4 7v9l-8-2v-7z|nB3:M3 12l8-7 4 7v9l-8-2v-8|wk1:M16 12l6-2v9l-6 4z',
  secFill: 'gk1:M12 4l7-3 4 9-1 9-7 4-9-4v-9z|Bk1:M2 12l9-8 5 8v10l-9-4v-7z|wk1:M16 13l5-3v9l-5 3z',
  point: 'wk1:M4 4q2-1 4 3l2 3 3-2 4 1 5 9-1 5M5 4l4 9-6-3q-3 1 1 3l6 4q0 4 5 6',
  compRed: 'wr1.5:M0 10l8-4 8 3-1 9-7 5-7-6z|lk1:M0 10l7 4v8M7 14l9-4M3 8l7 5|wk1:M17 6h5v12h-5|ng1:M18 9h3M18 12h3|rr1:M9 0h15v4H9z',
  compGo: 'lr1.5:M1 4 12 1l9 3-2 13-8 6-7-6z|nk1:M1 4l9 5v13M10 9l10-4M4 11l7 4|Gk1:M14 13h4v-2l6 5-6 6v-2h-4z',
  cursor: 'kw.5:M7 4v16l4-4 3 6 2-1-2-6h5z',
  eraser: 'pk1:M1 16 11 1l12 3-8 15-5 4-8-2z|nk.7:M1 16l10 2v5M11 18 23 4',
  pencil: 'rk.7:M19 2l4 3L9 19l-4-3z|sk.7:M5 16l4 3-8 4z|nk1:M17 4l4 3',
  arc: 'nk1:M5 22Q-2 13 3 5 12-2 21 6|nr1.500:M5 22 21 6M3 5l10 9|nr3:M3 5h0M21 6h0M5 22h0',
  circle: 'ok1:M1 12a11 11 0 1 0 22 0a11 11 0 1 0-22 0|nw3:M12 12l8-8|nr1:M12 12l8-8|nr4:M12 12h0M20 4h0',
  pushpull: 'ok1:M1 14 12 8l11 6-11 7z|dk1:M1 14v3l11 7 11-7v-3l-11 7z|rk1:M12 1l5 7h-3v6h-4V8H7z',
  offset: 'nr1.500:M1 3Q18-2 22 22|nk1.5:M3 8q9-3 14 10M5 14q5-2 8 6|rk.7:M22 2l-1 9-3-2-7 8-3-3 7-7-3-2z',
  move: 'rk.7:M12 1l4 5h-3v5h5V8l5 4-5 4v-3h-5v5h3l-4 5-4-5h3v-5H6v3l-5-4 5-4v3h5V6H8z',
  rotate: 'rk.7:M2 10Q7-1 18 4l3-2 1 9-9-1 3-3Q9 4 6 11zM22 13q-5 11-16 7l-3 2-1-8 9 1-3 3q7 2 10-5z',
  scale: 'wr1:M1 0h23v23H1z|ok1:M1 6h17v17H1z|rk.7:M22 1l1 9-4-2-5 7-5-4 6-6-3-3z',
  tape: 'yk1:M2 21 8 16l5 4-9 4z|Dk1:M10 5l8-4 5 4-2 12-6 3-5-5z|yk1:M11 9a5 5 0 1 0 10 0a5 5 0 1 0-10 0|ln:M14 8h4v3h-4z',
  label: 'nk1.5:M8 8H2v12|kk1:M1 19h4l-2 4z|wk1:M7 0h17v14H7z|Tk11:9 11 A1',
  bucket: 'gk1:M6 3 16 1l7 8-2 10-7 4-8-9z|lk1:M7 4q7-5 10 2L8 11z|Yk1:M1 21Q2 9 8 8q7-1 8 4-7-1-8 9l-3 2z|nk1:M16 1q8 4 4 12',
  whBox: whBox + '|rk1:M6 5l12-3 1 12-9 3z|nw1:M8 7q8-1 8 6M9 11q3-1 4 3',
  whGem: whBox + '|wk.7:M0 14l7-1 1 6zM17 3l6 2-3 4z|rk1:M2 8l5-5h9l6 5-9 8z|nR1:M2 8h20M8 3l4 13 4-13',
  whSend: 'wr1.500:M1 3l17-2 4 14-8 8-11-1z|nr1.500:M3 8l15-2M5 12h9q3 2 3 5M6 17l4-2 2 5M6 20h5|Bk1:M9 14h8v-4l7 7-7 6v-4H9z',
  whUp: whBox + '|wk.7:M15 2l6-1 2 6-6 3z|Rk1:M5 6l11-2 1 10-7 3z|Gk.5:M19 11l5 6h-3v7h-5v-7h-3z',
  whGray: 'wg1:M1 6l12-5 8 4-3 15-9 4-6-6z|nl2:M1 6l9 5v12M10 11l10-6M5 12l7-5M13 10l4 6|gn:M17 5l6 7h-3v6h-6v-6h-3z',
  gemGear: 'rk1:M1 9l5-7h11l6 7-11 14z|nR1:M1 9h22M7 2l5 21 5-21|Rn:M7 3h9l3 5H5z|wr2:M16 18a3 3 0 1 0 6 0a3 3 0 1 0-6 0',
  user: 'nD1:M0 12a12 12 0 1 0 24 0a12 12 0 1 0-24 0M7 9a5 5 0 1 0 10 0a5 5 0 1 0-10 0M4 20q0-6 8-6t8 6',
  cubeX: `uk1:${hexa}|Sn:M2 6 12 2 20 9 9 13z|nk.7:M1 6l9 7 12-3M10 13 7 23`,
  cubeBack: `wg1:${hexa}|nl1:M1 6l9 7 12-3M10 13 7 23M12 1v11l8 7M12 12l-7 3`,
  cubeWire: `nk1:${hexa}|nk.7:M1 6l9 7 12-3M10 13 7 23M12 1v12l8 6M12 13l-8 2`,
  cubeHidden: `wk1:${hexa}|nl1:M5 18l11-5 4 6`,
  cubeShade: `ok1:${hexa}|dn:M17 12 22 10 20 19 13 21z`,
  cubeTex: `ok1:${hexa}|nk3:M4 8 13 4M5 14l14-5M7 20l13-5`,
  cubeMono: `Bk1:${hexa}|on:M2 8 18 12 8 22z|on:M2 7 20 10 15 14z|nk1:${hexa}`,
  hIso: house,
  hTop: 'ok1:M3 4 10 1l12 3v17l-8 3-11-3z|nk1:M13 6v17|wk1:M16 3h4v7h-4z',
  hFront: 'wk2:M4 11v12h16V11|wk2:M2 13 12 3l10 10M5 9V4|kk1:M9 14h6v8H9z',
  hRight: 'wk1.500:M3 12v11h18V12z|dk1:M1 12 5 5h15l3 7z|wk1.5:M13 1h6v6h-6z',
  hBack: 'wk2:M4 11v12h16V11|wk2:M2 13 12 3l10 10M5 9V4',
  hLeft: 'wk1.5:M3 12v11h18V12z|dk1:M1 12 5 4h15l3 8zM5 4V2h3v2z',
  solidShell: slabs('d', 'd'), solidInt: slabs('n', 'n') + '|dk1:M9 8l5-1 1 6-5 2z',
  solidUni: slabs('d', 'd') + '|nk1:M9 8l4-1 1 6-4 1', solidSub: slabs('d', 'w') + '|dk1:M9 8l4-1 1 6-4 1z',
  solidTrim: slabs('B', 'd') + '|wk1:M9 8l4-1 1 6-4 1z',
  fan: 'wk1:M-3 24Q-4-4 27-2l-2 9Q8 5 4 25z|lk.7:M-3 21Q1-1 27-2l-1 6Q6 3 1 23z|nr1:M4 25l14-2 7-16M11 14l7 9',
  cloth: 'wk1.5:M1 4Q12-1 22 2v11l-8 9-9-4z|ng1:M6 4v13M12 2l-1 9 2 10M18 3l-2 12',
  linkBall: 'nr1.500:M4 14Q4 1 12 1t8 14|Gk1:M1 13l3-2h6v9H1z|Yk1:M15 19a4 4 0 1 0 8 0a4 4 0 1 0-8 0',
  meshG: 'nG1.5:M16 0 4 10-1 21l7 4h13l4-5-1-12zM4 10h12l6-2M4 10l3 8 12 2M16 10l3 10M7 18l-1 7M16 0v10',
  compGray: 'lg1:M1 3 13 0l9 4-2 13-9 6-7-5z|ng2:M1 3l9 6v13M10 9l12-5M4 10l8 4M13 4l4 14',
  freehand: 'nR3:M20 1q3 8-7 6Q1 1 2 6q1 4 11 3 11 1 8 6-2 5-12 1-7-1-8 5|nr1.500:M20 1q3 8-7 6Q1 1 2 6q1 4 11 3 11 1 8 6-2 5-12 1-7-1-8 5|nr4:M20 1h0M1 22h0',
  rect: 'ok1:M3 2h17v20H3z|nw3:M3 22 20 2|nr1:M3 22 20 2|nr3:M3 22h0M20 2h0',
  rotRect: 'ok1:M3 2h17v18H3z|nw3:M3 7q15 0 17 13|nr1:M3 2v20h17q0-14-17-15|nr3:M3 2h0M3 7h0M3 22h0M20 22h0',
  polygon: 'ok1:M12 1 22 8l-3 12H6L1 9z|nr1:M1 12a11 11 0 1 0 22 0a11 11 0 1 0-22 0M12 12l8-7|nr4:M12 12h0M20 5h0',
  arc2: 'nk1:M22 2q-2 17-20 20|nr1:M2 2h20L2 22|nr4:M2 2h0M22 2h0M2 22h0',
  arc3: 'nk1:M9 2q14-1 14 11-3 11-13 10-7-2-8-9|nr1:M9 3l11 17L3 15|nr4:M9 3h0M20 20h0M3 15h0',
  pie: 'ok1:M2 4h19q-2 16-19 17z|nw3:M3 20 20 5|nr1:M2 4h19L2 21|nr3:M2 4h0M21 4h0M2 21h0',
  follow: 'Dk1:M3 21Q-2 5 12 2q10-3 11 4l-2 5Q12 7 9 12l5 4 1-4 4 8-8 4q-4-1-5-2z|nr3:M7 11q6-7 12-4M9 18l6 1',
  dim: 'nk1:M4 14 14 4M1 11l6 6M1 17l6-6M11 1l6 6M11 7l6-6M4 14l7 8M14 4l8 7|nG3:M11 22h0M22 12h0|Tk9:3 7 3',
  protractor: 'yk1:M2 22Q-1 4 22 2 18 20 2 22M6 17q0-8 11-11-3 9-11 11z|nk.5:M4 19 20 4',
  axes: 'nr1.500:M3 5l19 15|nG1.500:M3 18 22 7|nb2:M10 2v20|un:M7 6l3-6 3 6z|Gn:M18 5h5l-3 5z|rn:M17 20l6 2-2-6z|nk4:M10 12h0',
  text3d: 'dk1.500:M3 20 9 1h5l8 17-5 5-4-5-4 2-1 3z|ok1:M7 18 11 4l4 12z'
};

const esc = s => s.replace(/&/g, '&amp;').replace(/</g, '&lt;');
function draw(name) {
  const body = ICONS[name].split('|').map(layer => {
    const cut = layer.indexOf(':'), head = layer.slice(0, cut), rest = layer.slice(cut + 1);
    if (head[0] === 'T') {
      const [x, y, ...words] = rest.split(' ');
      return `<text x="${x}" y="${y}" fill="${INK[head[1]]}" font-size="${head.slice(2)}" font-weight="700" font-family="Liberation Mono, monospace">${esc(words.join(' '))}</text>`;
    }
    const stroke = INK[head[1]], width = head.slice(2) || 1;
    return `<path d="${rest}" fill="${INK[head[0]]}" stroke="${stroke}" stroke-width="${width}"/>`;
  }).join('');
  return `<svg viewBox="0 0 24 24" aria-hidden="true">${body}</svg>`;
}
document.querySelectorAll('[data-tools]').forEach(bar => {
  bar.innerHTML = bar.dataset.tools.split(' ').map(token => {
    if (token === '|') return '<span class="sep"></span>';
    const name = token.replace(/[*+]$/, '');
    const cls = token.endsWith('*') ? ' active' : token.endsWith('+') ? ' split' : '';
    return `<button class="tool${cls}" aria-label="${name}">${draw(name)}</button>`;
  }).join('');
});
```
